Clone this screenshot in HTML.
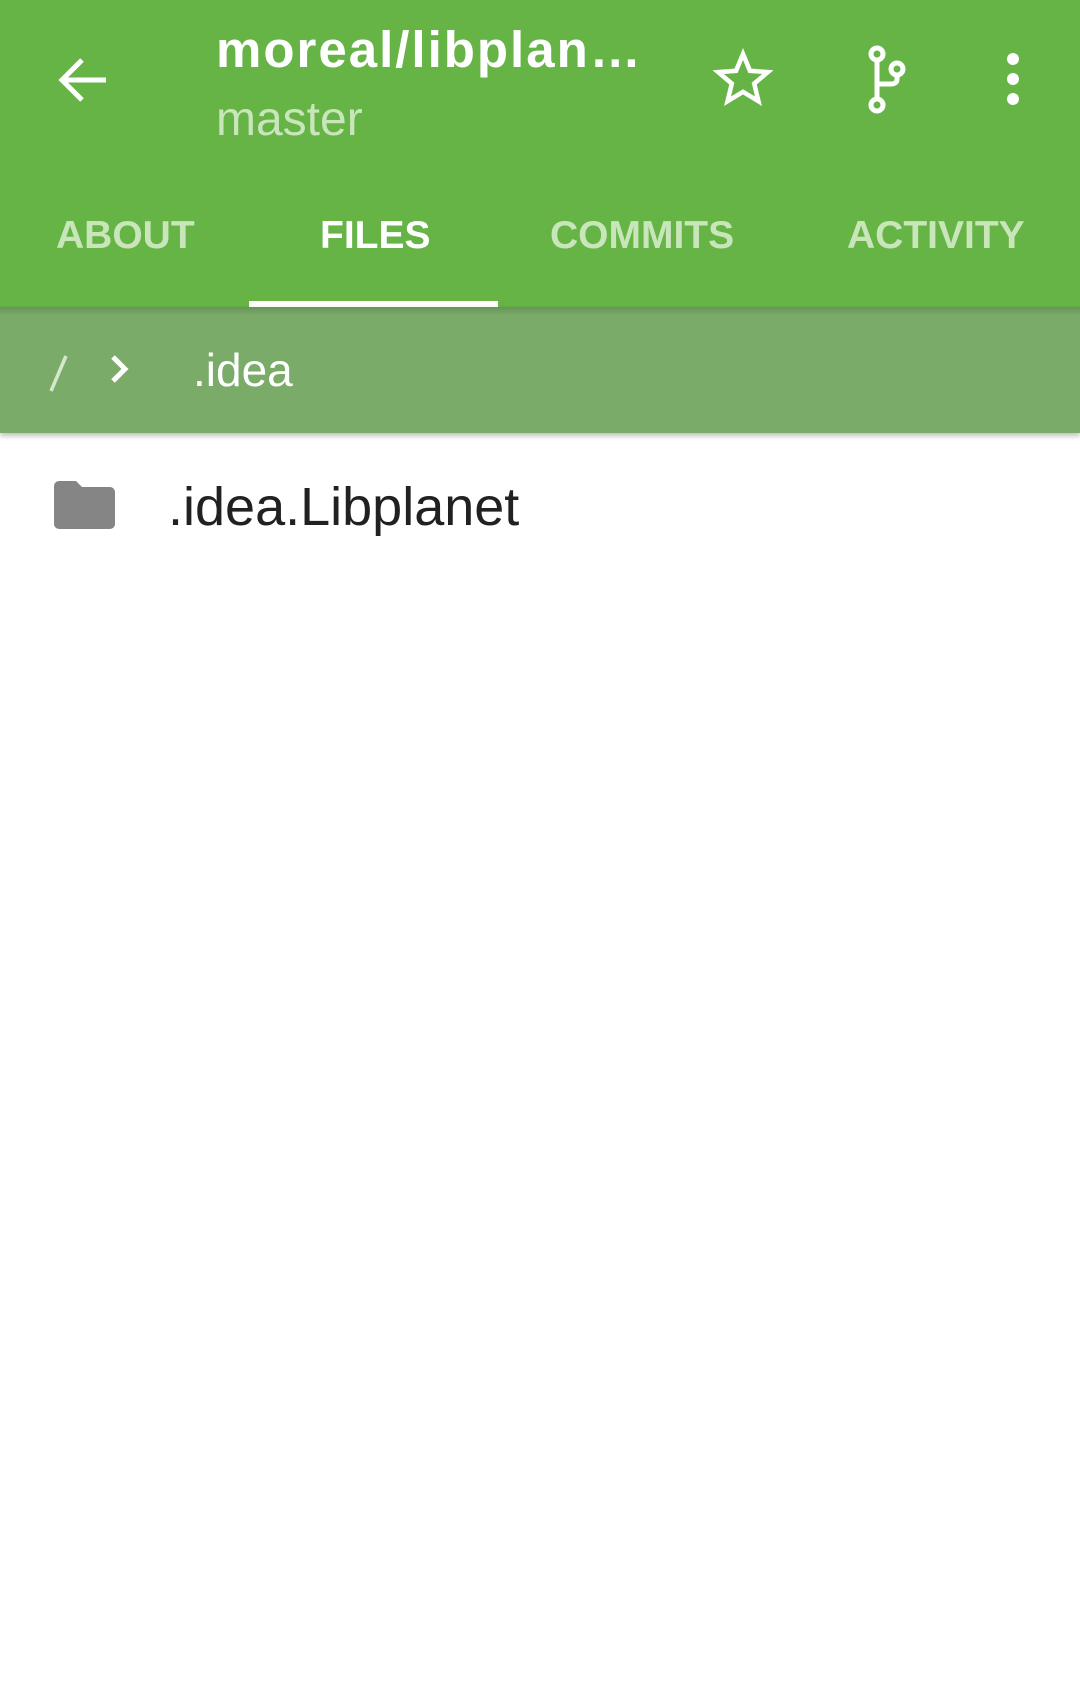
<!DOCTYPE html>
<html><head><meta charset="utf-8"><style>
html,body{margin:0;padding:0;width:1080px;height:1699px;background:#fff;overflow:hidden;font-family:"Liberation Sans",sans-serif}
.hdr{position:absolute;left:0;top:0;width:1080px;height:307px;background:#66b446}
.t{position:absolute;white-space:nowrap}
.tab{position:absolute;white-space:nowrap;top:214px;font-size:39px;font-weight:bold;color:#c9e6bb}
.bc{position:absolute;left:0;top:307px;width:1080px;height:126px;background:#7aab68;box-shadow:0 3px 5px rgba(0,0,0,.25)}
.bc:before{content:"";position:absolute;left:0;top:0;width:100%;height:8px;background:linear-gradient(rgba(0,0,0,.15),rgba(0,0,0,0))}
</style></head><body>
<div class="hdr">
<svg class="t" style="left:54px;top:52px" width="60" height="56" viewBox="0 0 60 56"><path d="M52 28H10M28 8L8 28l20 20" stroke="#fff" stroke-width="5" fill="none"/></svg>
<div class="t" style="left:216px;top:20px;font-size:51px;font-weight:bold;color:#fff;letter-spacing:2px">moreal/libplan…</div>
<div class="t" style="left:216px;top:92px;font-size:48px;color:#c9e6bb">master</div>
<svg class="t" style="left:708px;top:46px" width="70" height="64" viewBox="0 0 24 24"><path d="M12 3l2.6 6.3 6.7.5-5.1 4.3 1.6 6.6L12 17.2l-5.8 3.5 1.6-6.6-5.1-4.3 6.7-.5z" fill="none" stroke="#fff" stroke-width="1.7" stroke-linejoin="miter"/></svg>
<svg class="t" style="left:840px;top:30px" width="100" height="100" viewBox="0 0 100 100"><g fill="none" stroke="#fff" stroke-width="5"><circle cx="37" cy="24" r="6"/><circle cx="57" cy="39" r="6"/><circle cx="37" cy="75" r="6"/><path d="M37 30V69M57 45v4q0 5-6 5H37"/></g></svg>
<svg class="t" style="left:1000px;top:52px" width="26" height="54" viewBox="0 0 26 54"><circle cx="13" cy="7" r="6" fill="#fff"/><circle cx="13" cy="27" r="6" fill="#fff"/><circle cx="13" cy="47" r="6" fill="#fff"/></svg>
<div class="tab" style="left:56px">ABOUT</div>
<div class="tab" style="left:320px;color:#fff">FILES</div>
<div class="tab" style="left:550px">COMMITS</div>
<div class="tab" style="left:847px">ACTIVITY</div>
<div class="t" style="left:249px;top:301px;width:249px;height:6px;background:#fff"></div>
</div>
<div class="bc">
<svg class="t" style="left:46px;top:44px" width="24" height="46" viewBox="0 0 24 46"><path d="M20 5L5 40" stroke="#d5e8cc" stroke-width="3.5"/></svg>
<svg class="t" style="left:108px;top:46px" width="24" height="32" viewBox="0 0 24 32"><path d="M5 4l12 12-12 12" fill="none" stroke="#fff" stroke-width="5"/></svg>
<div class="t" style="left:193px;top:36px;font-size:46px;color:#fff">.idea</div>
</div>
<svg class="t" style="left:54px;top:481px" width="61" height="48" viewBox="0 0 61 48"><path d="M5 0h17l6 6h28a5 5 0 0 1 5 5v32a5 5 0 0 1-5 5H5a5 5 0 0 1-5-5V5a5 5 0 0 1 5-5z" fill="#858585"/></svg>
<div class="t" style="left:168px;top:476px;font-size:54px;color:#212121">.idea.Libplanet</div>
</body></html>
